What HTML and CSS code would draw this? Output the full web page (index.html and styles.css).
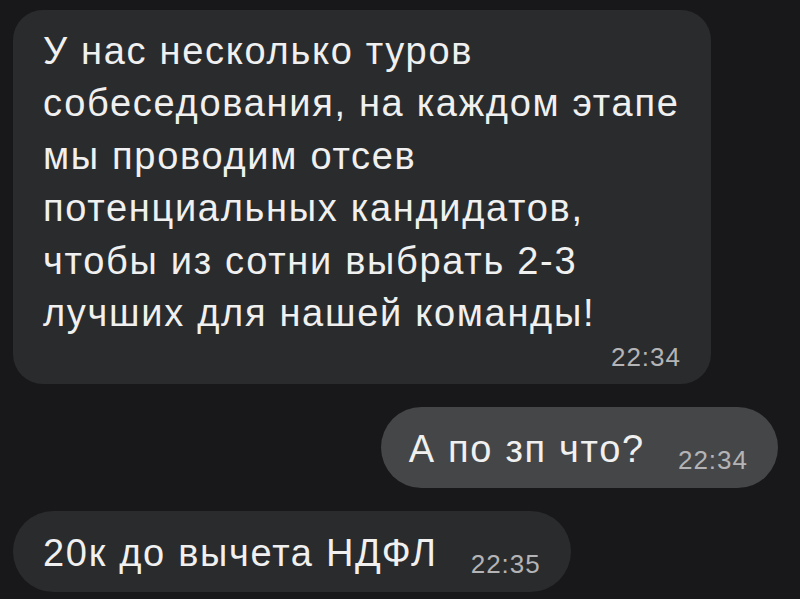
FILE: index.html
```html
<!DOCTYPE html>
<html lang="ru">
<head>
    <meta charset="UTF-8">
    <meta name="viewport" content="width=device-width, initial-scale=1.0">
    <title>Чат</title>
    <link rel="stylesheet" href="styles.css">
</head>
<body>
    <section class="chat">
        <div class="message incoming long">
            <p class="text">У нас несколько туров<br>
                собеседования, на каждом этапе<br>
                мы проводим отсев<br>
                потенциальных кандидатов,<br>
                чтобы из сотни выбрать 2-3<br>
                лучших для нашей команды!</p>
            <span class="time time-block">22:34</span>
        </div>
        <div class="message outgoing short">
            <span class="text">А по зп что?</span>
            <span class="time">22:34</span>
        </div>
        <div class="message incoming short">
            <span class="text">20к до вычета НДФЛ</span>
            <span class="time">22:35</span>
        </div>
    </section>
</body>
</html>
```

FILE: styles.css
```css
body {
    margin: 0;
    padding: 0;
    background-color: #18181a;
    font-family: "Liberation Sans", Arial, sans-serif;
    color: #f0f0f0;
}

.chat {
    display: flex;
    flex-direction: column;
    align-items: flex-start;
    padding: 10px 22px 0 13px;
}

.message {
    background-color: #2a2b2d;
    border-radius: 30px;
}

.text {
    margin: 0;
    font-size: 38px;
    letter-spacing: 1.7px;
    white-space: nowrap;
}

.time {
    font-size: 26px;
    line-height: 30px;
    letter-spacing: 1px;
    color: #b4b4b6;
}

.long {
    width: 698px;
    box-sizing: border-box;
    padding: 15px 30px 12px 30px;
}

.long .text {
    line-height: 52.4px;
}

.time-block {
    display: block;
    text-align: right;
    margin-top: 3px;
}

.short {
    display: flex;
    align-items: flex-start;
    gap: 33px;
    height: 81px;
    box-sizing: border-box;
    padding: 22px 30px 0 30px;
    border-radius: 41px;
    margin-top: 23px;
}

.short .text {
    line-height: 40px;
}

.short .time {
    margin-top: 16px;
}

.outgoing {
    align-self: flex-end;
    background-color: #454648;
    padding-left: 28px;
}
```
